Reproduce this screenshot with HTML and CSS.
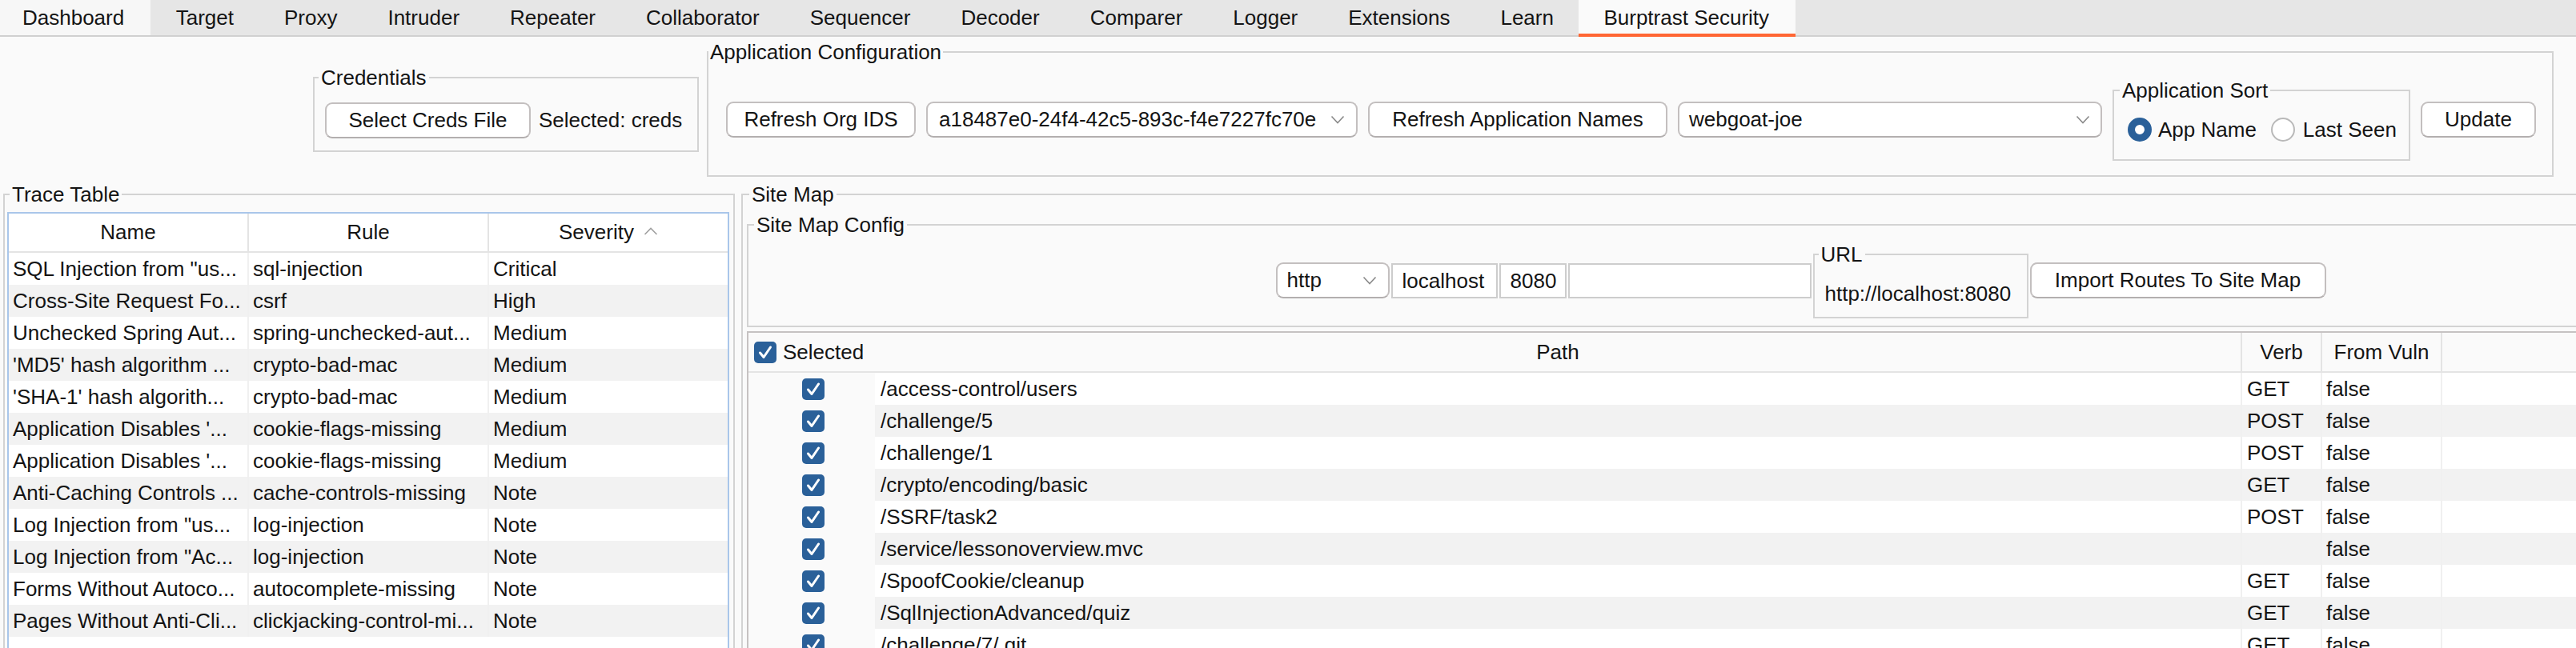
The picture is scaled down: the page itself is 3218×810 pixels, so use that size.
FILE: index.html
```html
<!DOCTYPE html>
<html lang="en">
<head>
<meta charset="utf-8">
<title>Burptrast Security</title>
<link rel="stylesheet" href="styles.css">
</head>
<body>
<div class="tabbar">
  <div class="tab first">Dashboard</div>
  <div class="tab">Target</div>
  <div class="tab">Proxy</div>
  <div class="tab">Intruder</div>
  <div class="tab">Repeater</div>
  <div class="tab">Collaborator</div>
  <div class="tab">Sequencer</div>
  <div class="tab">Decoder</div>
  <div class="tab">Comparer</div>
  <div class="tab">Logger</div>
  <div class="tab">Extensions</div>
  <div class="tab">Learn</div>
  <div class="tab active">Burptrast Security</div>
</div>

<div class="top">
  <fieldset class="group creds">
    <legend class="lg-creds">Credentials</legend>
    <div class="creds-body">
      <button class="btn w-creds">Select Creds File</button>
      <span class="plain">Selected: creds</span>
    </div>
  </fieldset>

  <fieldset class="group appcfg">
    <legend class="lg-app">Application Configuration</legend>
    <div class="appcfg-body">
      <button class="btn w-org">Refresh Org IDS</button>
      <div class="combo w-orgcombo"><span>a18487e0-24f4-42c5-893c-f4e7227fc70e</span><svg class="chev" width="18" height="11" viewBox="0 0 18 11"><polyline points="1.5,1.5 9,9.5 16.5,1.5" fill="none" stroke="#8a8a8a" stroke-width="1.6"/></svg></div>
      <button class="btn w-names">Refresh Application Names</button>
      <div class="combo w-appcombo"><span>webgoat-joe</span><svg class="chev" width="18" height="11" viewBox="0 0 18 11"><polyline points="1.5,1.5 9,9.5 16.5,1.5" fill="none" stroke="#8a8a8a" stroke-width="1.6"/></svg></div>
      <fieldset class="group appsort">
        <legend class="lg-sort">Application Sort</legend>
        <div class="sort-body">
          <span class="radio on"></span><span class="rlabel">App Name</span>
          <span class="radio off"></span><span class="rlabel">Last Seen</span>
        </div>
      </fieldset>
      <button class="btn w-update">Update</button>
    </div>
  </fieldset>
</div>

<div class="main">
  <fieldset class="group trace">
    <legend class="lg-trace">Trace Table</legend>
    <div class="trace-table">
      <div class="thead">
        <div class="th">Name</div>
        <div class="th sep">Rule</div>
        <div class="th sep">Severity<svg class="sortup" width="18" height="10" viewBox="0 0 18 10"><polyline points="1.5,9 9,1.5 16.5,9" fill="none" stroke="#a0a0a0" stroke-width="1.6"/></svg></div>
      </div>
      <div class="tbody">
        <div class="tr"><div class="td">SQL Injection from &quot;us...</div><div class="td sep">sql-injection</div><div class="td sep">Critical</div></div>
        <div class="tr"><div class="td">Cross-Site Request Fo...</div><div class="td sep">csrf</div><div class="td sep">High</div></div>
        <div class="tr"><div class="td">Unchecked Spring Aut...</div><div class="td sep">spring-unchecked-aut...</div><div class="td sep">Medium</div></div>
        <div class="tr"><div class="td">'MD5' hash algorithm ...</div><div class="td sep">crypto-bad-mac</div><div class="td sep">Medium</div></div>
        <div class="tr"><div class="td">'SHA-1' hash algorith...</div><div class="td sep">crypto-bad-mac</div><div class="td sep">Medium</div></div>
        <div class="tr"><div class="td">Application Disables '...</div><div class="td sep">cookie-flags-missing</div><div class="td sep">Medium</div></div>
        <div class="tr"><div class="td">Application Disables '...</div><div class="td sep">cookie-flags-missing</div><div class="td sep">Medium</div></div>
        <div class="tr"><div class="td">Anti-Caching Controls ...</div><div class="td sep">cache-controls-missing</div><div class="td sep">Note</div></div>
        <div class="tr"><div class="td">Log Injection from &quot;us...</div><div class="td sep">log-injection</div><div class="td sep">Note</div></div>
        <div class="tr"><div class="td">Log Injection from &quot;Ac...</div><div class="td sep">log-injection</div><div class="td sep">Note</div></div>
        <div class="tr"><div class="td">Forms Without Autoco...</div><div class="td sep">autocomplete-missing</div><div class="td sep">Note</div></div>
        <div class="tr"><div class="td">Pages Without Anti-Cli...</div><div class="td sep">clickjacking-control-mi...</div><div class="td sep">Note</div></div>
      </div>
    </div>
  </fieldset>

  <fieldset class="group sitemap">
    <legend class="lg-site">Site Map</legend>
    <div class="sitemap-body">
      <fieldset class="group smconfig">
        <legend class="lg-smc">Site Map Config</legend>
        <div class="smc-row">
          <div class="combo w-proto"><span>http</span><svg class="chev" width="18" height="11" viewBox="0 0 18 11"><polyline points="1.5,1.5 9,9.5 16.5,1.5" fill="none" stroke="#8a8a8a" stroke-width="1.6"/></svg></div>
          <div class="field w-host">localhost</div>
          <div class="field w-port">8080</div>
          <div class="field w-extra"></div>
          <fieldset class="group url">
            <legend class="lg-url">URL</legend>
            <div class="url-body">http://localhost:8080</div>
          </fieldset>
          <button class="btn w-import">Import Routes To Site Map</button>
        </div>
      </fieldset>

      <div class="sm-table">
        <div class="sm-head">
          <div class="sh c-sel"><span class="cb"><svg width="28" height="27" viewBox="0 0 28 27"><polyline points="7.5,14 12,19.5 20.5,7" fill="none" stroke="#fff" stroke-width="3" stroke-linecap="round" stroke-linejoin="round"/></svg></span><span>Selected</span></div>
          <div class="sh c-path center">Path</div>
          <div class="sh c-verb center sep">Verb</div>
          <div class="sh c-vuln center sep">From Vuln</div>
          <div class="sh c-more center sep">In Site Map</div>
        </div>
        <div class="sm-body">
          <div class="sr"><div class="sc c-sel"><span class="cb"><svg width="28" height="27" viewBox="0 0 28 27"><polyline points="7.5,14 12,19.5 20.5,7" fill="none" stroke="#fff" stroke-width="3" stroke-linecap="round" stroke-linejoin="round"/></svg></span></div><div class="sc c-path">/access-control/users</div><div class="sc c-verb sep">GET</div><div class="sc c-vuln sep">false</div><div class="sc c-more sep"></div></div>
          <div class="sr"><div class="sc c-sel"><span class="cb"><svg width="28" height="27" viewBox="0 0 28 27"><polyline points="7.5,14 12,19.5 20.5,7" fill="none" stroke="#fff" stroke-width="3" stroke-linecap="round" stroke-linejoin="round"/></svg></span></div><div class="sc c-path">/challenge/5</div><div class="sc c-verb sep">POST</div><div class="sc c-vuln sep">false</div><div class="sc c-more sep"></div></div>
          <div class="sr"><div class="sc c-sel"><span class="cb"><svg width="28" height="27" viewBox="0 0 28 27"><polyline points="7.5,14 12,19.5 20.5,7" fill="none" stroke="#fff" stroke-width="3" stroke-linecap="round" stroke-linejoin="round"/></svg></span></div><div class="sc c-path">/challenge/1</div><div class="sc c-verb sep">POST</div><div class="sc c-vuln sep">false</div><div class="sc c-more sep"></div></div>
          <div class="sr"><div class="sc c-sel"><span class="cb"><svg width="28" height="27" viewBox="0 0 28 27"><polyline points="7.5,14 12,19.5 20.5,7" fill="none" stroke="#fff" stroke-width="3" stroke-linecap="round" stroke-linejoin="round"/></svg></span></div><div class="sc c-path">/crypto/encoding/basic</div><div class="sc c-verb sep">GET</div><div class="sc c-vuln sep">false</div><div class="sc c-more sep"></div></div>
          <div class="sr"><div class="sc c-sel"><span class="cb"><svg width="28" height="27" viewBox="0 0 28 27"><polyline points="7.5,14 12,19.5 20.5,7" fill="none" stroke="#fff" stroke-width="3" stroke-linecap="round" stroke-linejoin="round"/></svg></span></div><div class="sc c-path">/SSRF/task2</div><div class="sc c-verb sep">POST</div><div class="sc c-vuln sep">false</div><div class="sc c-more sep"></div></div>
          <div class="sr"><div class="sc c-sel"><span class="cb"><svg width="28" height="27" viewBox="0 0 28 27"><polyline points="7.5,14 12,19.5 20.5,7" fill="none" stroke="#fff" stroke-width="3" stroke-linecap="round" stroke-linejoin="round"/></svg></span></div><div class="sc c-path">/service/lessonoverview.mvc</div><div class="sc c-verb sep"></div><div class="sc c-vuln sep">false</div><div class="sc c-more sep"></div></div>
          <div class="sr"><div class="sc c-sel"><span class="cb"><svg width="28" height="27" viewBox="0 0 28 27"><polyline points="7.5,14 12,19.5 20.5,7" fill="none" stroke="#fff" stroke-width="3" stroke-linecap="round" stroke-linejoin="round"/></svg></span></div><div class="sc c-path">/SpoofCookie/cleanup</div><div class="sc c-verb sep">GET</div><div class="sc c-vuln sep">false</div><div class="sc c-more sep"></div></div>
          <div class="sr"><div class="sc c-sel"><span class="cb"><svg width="28" height="27" viewBox="0 0 28 27"><polyline points="7.5,14 12,19.5 20.5,7" fill="none" stroke="#fff" stroke-width="3" stroke-linecap="round" stroke-linejoin="round"/></svg></span></div><div class="sc c-path">/SqlInjectionAdvanced/quiz</div><div class="sc c-verb sep">GET</div><div class="sc c-vuln sep">false</div><div class="sc c-more sep"></div></div>
          <div class="sr"><div class="sc c-sel"><span class="cb"><svg width="28" height="27" viewBox="0 0 28 27"><polyline points="7.5,14 12,19.5 20.5,7" fill="none" stroke="#fff" stroke-width="3" stroke-linecap="round" stroke-linejoin="round"/></svg></span></div><div class="sc c-path">/challenge/7/.git</div><div class="sc c-verb sep">GET</div><div class="sc c-vuln sep">false</div><div class="sc c-more sep"></div></div>
        </div>
      </div>
    </div>
  </fieldset>
</div>
</body>
</html>
```

FILE: styles.css
```css
* { box-sizing: border-box; }
html, body { margin: 0; padding: 0; }
body {
  width: 3218px;
  height: 810px;
  overflow: hidden;
  background: #fafafa;
  font-family: "Liberation Sans", Arial, sans-serif;
  font-size: 26px;
  color: #141414;
}

/* ---------- tab bar ---------- */
.tabbar {
  display: flex;
  height: 46px;
  background: #e6e6e6;
  border-bottom: 2px solid #d0d0d0;
}
.tab {
  padding: 1px 31.5px 0;
  line-height: 43px;
  white-space: nowrap;
}
.tab.first { padding-left: 28px; padding-right: 33px; background: #f7f7f7; }
.tab.active {
  background: #fafafa;
  height: 46px;
  border-bottom: 4px solid #ff6633;
  padding-left: 31px;
  padding-right: 33px;
}

/* ---------- group boxes ---------- */
fieldset.group {
  margin: 0;
  padding: 0;
  border: 2px solid #d3d3d3;
  min-width: 0;
}
fieldset.group > legend {
  padding: 0 3px;
  line-height: 30px;
  white-space: nowrap;
}

/* ---------- buttons / inputs ---------- */
.btn {
  font: inherit;
  color: inherit;
  height: 45px;
  padding: 0;
  background: #ffffff;
  border: 2px solid #c3bfbf;
  border-bottom-color: #b3afaf;
  border-radius: 9px;
  text-align: center;
  white-space: nowrap;
  flex: none;
}
.combo {
  display: flex;
  align-items: center;
  justify-content: space-between;
  height: 45px;
  background: #ffffff;
  border: 2px solid #c3bfbf;
  border-bottom-color: #b3afaf;
  border-radius: 9px;
  padding: 0 12px 0 12px;
  white-space: nowrap;
  flex: none;
}
.chev { flex: none; }
.field {
  height: 44px;
  line-height: 40px;
  background: #ffffff;
  border: 2px solid #cdcdcd;
  padding: 0 12px;
  white-space: nowrap;
  flex: none;
}

/* ---------- top area ---------- */
.top {
  display: flex;
  align-items: center;
  justify-content: flex-end;
  gap: 10px;
  padding: 4px 28px 0 0;
}
.creds { width: 482px; }
.lg-creds { margin-left: 5px; }
.creds-body {
  display: flex;
  align-items: center;
  gap: 10px;
  padding: 16px 0 15px 13px;
}
.w-creds { width: 257px; }

.appcfg { width: 2307px; }
.lg-app { margin-left: 0; padding: 0 2px !important; }
.appcfg-body {
  display: flex;
  align-items: center;
  gap: 13px;
  height: 139px;
  padding-left: 22px;
}
.w-org { width: 237px; }
.w-orgcombo { width: 539px; padding-left: 14px; padding-right: 14px; }
.w-names { width: 374px; }
.w-appcombo { width: 530px; padding-left: 12px; padding-right: 13px; }
.w-update { width: 144px; }

.appsort { width: 372px; margin: 0 3px; }
.lg-sort { margin-left: 7px; }
.sort-body {
  display: flex;
  align-items: center;
  height: 71px;
  padding-left: 17px;
  padding-bottom: 3px;
}
.radio {
  width: 30px;
  height: 30px;
  border-radius: 50%;
  background: #ffffff;
  flex: none;
}
.radio.on { border: 9px solid #2a6099; }
.radio.off { border: 2px solid #b9b9b9; margin-left: 18px; }
.rlabel { margin-left: 8px; white-space: nowrap; }
.radio.off + .rlabel { margin-left: 10px; }

/* ---------- main area ---------- */
.main {
  display: flex;
  gap: 8px;
  padding: 7px 0 0 4px;
  width: 3600px;
}

.trace { width: 914px; flex: none; }
.lg-trace { margin-left: 6px; }
.trace-table {
  margin: 7px 5px 0 3px;
  border: 2px solid #a9c6ea;
  background: #ffffff;
  height: 560px;
}
.thead, .tr {
  display: grid;
  grid-template-columns: 298px 300px 300px;
}
.thead {
  height: 49px;
  border-bottom: 2px solid #e4e4e4;
  background: #ffffff;
}
.th {
  display: flex;
  align-items: center;
  justify-content: center;
  gap: 12px;
  white-space: nowrap;
}
.th.sep { border-left: 2px solid #e4e4e4; }
.sortup { flex: none; margin-top: -4px; }
.tr { height: 40px; }
.tr:nth-child(even) { background: #f2f2f2; }
.td {
  line-height: 40px;
  padding-left: 5px;
  white-space: nowrap;
  overflow: hidden;
}
.td.sep { border-left: 2px solid #f0f0f0; }

.sitemap { width: 2652px; flex: none; }
.lg-site { margin-left: 8px; }
.sitemap-body {
  display: flex;
  flex-direction: column;
  padding: 8px 10px 0 5px;
}
.smconfig { margin-left: 3px; }
.lg-smc { margin-left: 7px; }
.smc-row {
  display: flex;
  align-items: center;
  justify-content: center;
  gap: 2px;
  height: 111px;
  padding-bottom: 2px;
}
.w-proto { width: 142px; padding-left: 12px; padding-right: 14px; }
.w-host { width: 133px; }
.w-port { width: 84px; }
.w-extra { width: 304px; }
.url { width: 269px; margin: 0 4px; flex: none; }
.lg-url { margin-left: 5px; }
.url-body {
  padding: 19px 0 14px 13px;
  line-height: 30px;
  white-space: nowrap;
}
.w-import { width: 370px; height: 45px; }

.sm-table {
  margin-top: 5px;
  border-top: 2px solid #c6c2c2;
  border-left: 2px solid #c6c2c2;
  height: 420px;
}
.sm-head, .sr {
  display: grid;
  grid-template-columns: 158px 1706px 100px 150px 472px 1fr;
}
.sm-head {
  height: 50px;
  border-bottom: 2px solid #e4e4e4;
  background: #fafafa;
}
.sh {
  display: flex;
  align-items: center;
  white-space: nowrap;
}
.sh.center { justify-content: center; }
.sh.sep { border-left: 2px solid #e4e4e4; }
.sh.c-sel { padding-left: 7px; gap: 8px; }
.cb {
  display: block;
  width: 28px;
  height: 27px;
  border-radius: 5px;
  background: #2a6099;
  flex: none;
}
.cb svg { display: block; }
.sr { height: 40px; }
.sc {
  line-height: 40px;
  white-space: nowrap;
  overflow: hidden;
}
.sc.c-sel {
  display: flex;
  align-items: center;
  justify-content: center;
  padding-left: 4px;
  background: #fafafa;
}
.sc.c-path, .sc.c-verb, .sc.c-vuln, .sc.c-more { background: #ffffff; }
.sr:nth-child(even) .sc.c-path,
.sr:nth-child(even) .sc.c-verb,
.sr:nth-child(even) .sc.c-vuln,
.sr:nth-child(even) .sc.c-more { background: #f2f2f2; }
.sc.c-path { padding-left: 7px; }
.sc.c-verb { padding-left: 6px; }
.sc.c-vuln { padding-left: 5px; }
.sc.sep { border-left: 2px solid #f0f0f0; }
```
